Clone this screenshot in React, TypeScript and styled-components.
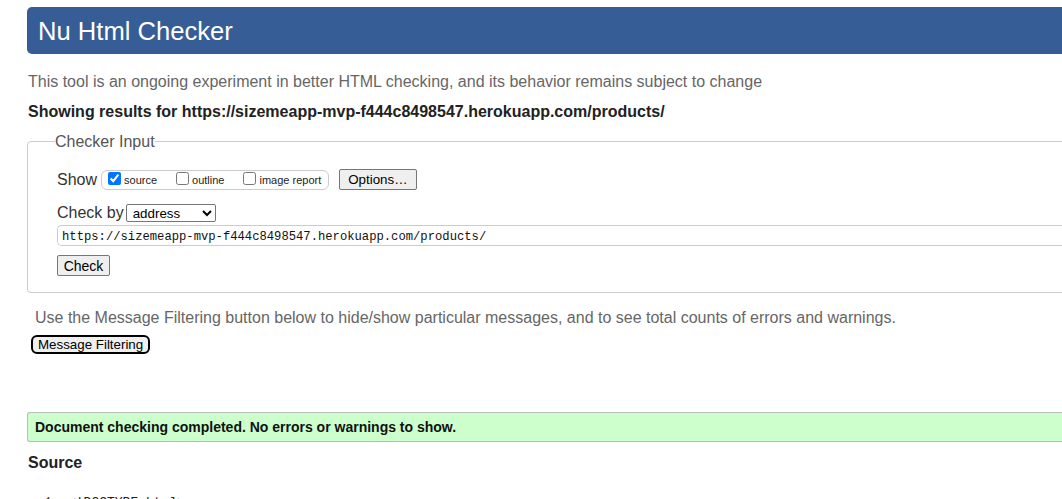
import React from "react";
import styled, { createGlobalStyle } from "styled-components";

const Global = createGlobalStyle`
  html, body { margin: 0; padding: 0; background: #fff; overflow: hidden; }
  body { font-family: "Liberation Sans", Arial, sans-serif; color: #222; }
`;

const Page = styled.div`
  width: 1100px;
  padding-left: 27px;
  box-sizing: border-box;
`;

const Header = styled.h1`
  margin: 7px 0 0 0;
  height: 47px;
  box-sizing: border-box;
  background: #365d95;
  border-radius: 5px 0 0 5px;
  color: #fff;
  font-size: 25.6px;
  font-weight: normal;
  display: flex;
  align-items: center;
  padding: 1px 0 0 11px;
`;

const Tagline = styled.p`
  margin: 18px 0 0 1px;
  font-size: 16px;
  line-height: 19px;
  color: #666;
`;

const Results = styled.p`
  margin: 11px 0 0 1px;
  font-size: 16px;
  line-height: 19px;
  font-weight: bold;
  color: #222;
`;

const Fieldset = styled.fieldset`
  margin: 11px 0 0 0;
  border: 1px solid #ccc;
  border-radius: 4px 0 0 4px;
  padding: 0 0 16px 29px;
  min-width: 0;
`;

const Legend = styled.legend`
  font-size: 16px;
  line-height: 19px;
  color: #555;
  padding: 0;
  margin-left: -2px;
`;

const Row = styled.div<{ $mt: number }>`
  display: flex;
  align-items: center;
  margin-top: ${(p) => p.$mt}px;
  font-size: 16px;
  color: #333;
`;

const RowLabel = styled.span<{ $mr: number }>`
  margin-right: ${(p) => p.$mr}px;
`;

const Pill = styled.div`
  display: flex;
  align-items: center;
  height: 20px;
  box-sizing: border-box;
  border: 1px solid #ccc;
  border-radius: 6px;
  padding: 0 7px 0 6px;
`;

const CheckLabel = styled.label<{ $mr: number }>`
  display: flex;
  align-items: center;
  font-size: 11px;
  color: #222;
  margin-right: ${(p) => p.$mr}px;
`;

const Box = styled.input`
  width: 13px;
  height: 13px;
  margin: 0 3px 2px 0;
`;

const NativeButton = styled.button<{ $h: number }>`
  font-family: "Liberation Sans", Arial, sans-serif;
  font-size: 13.33px;
  color: #000;
  background: #efefef;
  border: 1px solid #767676;
  border-radius: 2px;
  height: ${(p) => p.$h}px;
  padding: 0 8px;
  box-sizing: border-box;
`;

const OptionsButton = styled(NativeButton)`
  margin-left: 10px;
`;

const Select = styled.select`
  font-family: "Liberation Sans", Arial, sans-serif;
  font-size: 13.33px;
  width: 90px;
  height: 18px;
  box-sizing: border-box;
  border: 1px solid #767676;
  border-radius: 2px;
  padding: 0 0 0 2px;
  background: #fff;
  color: #000;
`;

const UrlInput = styled.input`
  display: block;
  margin-top: 3px;
  width: 1010px;
  height: 21px;
  box-sizing: border-box;
  border: 1px solid #ccc;
  border-right: none;
  border-radius: 5px 0 0 5px;
  padding: 2px 4px 0;
  font-family: "Liberation Mono", "DejaVu Sans Mono", monospace;
  font-size: 12.2px;
  color: #111;
`;

const CheckButton = styled(NativeButton)`
  display: block;
  margin-top: 9px;
  width: 53px;
  font-size: 14px;
  padding: 0;
`;

const FilterNote = styled.p`
  margin: 15px 0 0 8px;
  font-size: 16px;
  line-height: 19px;
  color: #666;
`;

const FilterButton = styled.button`
  display: block;
  margin: 8px 0 0 4px;
  height: 19px;
  box-sizing: border-box;
  padding: 0 5px;
  border: 2px solid #000;
  border-radius: 6px;
  background: #efefef;
  font-family: "Liberation Sans", Arial, sans-serif;
  font-size: 13.33px;
  color: #000;
  line-height: 14px;
`;

const Success = styled.div`
  margin-top: 58px;
  height: 30px;
  box-sizing: border-box;
  background: #ccffcc;
  border: 1px solid #bbb;
  border-right: none;
  border-radius: 3px 0 0 3px;
  display: flex;
  align-items: center;
  padding-left: 7px;
  font-size: 14px;
  font-weight: bold;
  color: #111;
`;

const SourceTitle = styled.h2`
  margin: 11px 0 0 1px;
  font-size: 16px;
  line-height: 19px;
  font-weight: bold;
  color: #222;
`;

const Code = styled.div`
  margin-top: 22px;
  display: flex;
  font-family: "Liberation Mono", "DejaVu Sans Mono", monospace;
  font-size: 13px;
  line-height: 18px;
  color: #222;
`;

const LineNo = styled.span`
  width: 25px;
  text-align: right;
  padding-right: 16px;
  color: #444;
`;

export default function App() {
  return (
    <>
      <Global />
      <Page>
        <Header>Nu Html Checker</Header>
        <Tagline>
          This tool is an ongoing experiment in better HTML checking, and its behavior remains subject to change
        </Tagline>
        <Results>Showing results for https://sizemeapp-mvp-f444c8498547.herokuapp.com/products/</Results>
        <Fieldset>
          <Legend>Checker Input</Legend>
          <Row $mt={18}>
            <RowLabel $mr={4}>Show</RowLabel>
            <Pill>
              <CheckLabel $mr={19}>
                <Box type="checkbox" defaultChecked />
                source
              </CheckLabel>
              <CheckLabel $mr={19}>
                <Box type="checkbox" />
                outline
              </CheckLabel>
              <CheckLabel $mr={0}>
                <Box type="checkbox" />
                image report
              </CheckLabel>
            </Pill>
            <OptionsButton $h={21}>Options…</OptionsButton>
          </Row>
          <Row $mt={14}>
            <RowLabel $mr={2}>Check by</RowLabel>
            <Select defaultValue="address">
              <option value="address">address</option>
              <option value="file">file upload</option>
              <option value="text">text input</option>
            </Select>
          </Row>
          <UrlInput defaultValue="https://sizemeapp-mvp-f444c8498547.herokuapp.com/products/" />
          <CheckButton $h={21}>Check</CheckButton>
        </Fieldset>
        <FilterNote>
          Use the Message Filtering button below to hide/show particular messages, and to see total counts of errors and warnings.
        </FilterNote>
        <FilterButton>Message Filtering</FilterButton>
        <Success>Document checking completed. No errors or warnings to show.</Success>
        <SourceTitle>Source</SourceTitle>
        <Code>
          <LineNo>1</LineNo>
          <span>&lt;!DOCTYPE html&gt;</span>
        </Code>
      </Page>
    </>
  );
}
